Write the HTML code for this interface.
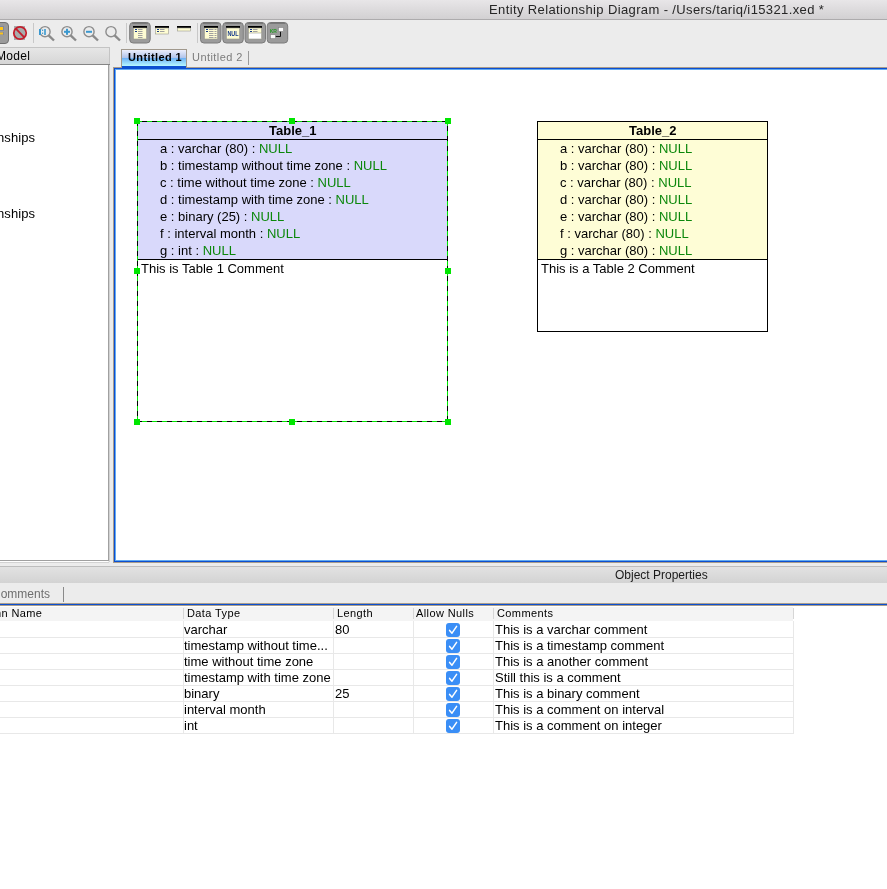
<!DOCTYPE html>
<html><head><meta charset="utf-8">
<style>
*{margin:0;padding:0;box-sizing:border-box}
html,body{width:887px;height:889px;overflow:hidden;background:#fff;font-family:"Liberation Sans",sans-serif;color:#000}
.a{position:absolute}
.t{position:absolute;white-space:pre;line-height:1;will-change:transform}
.nul{color:#0b870b}
</style></head><body>
<div class="a" style="left:0;top:0;width:887px;height:19px;background:linear-gradient(#e8e6e8,#d2d0d2)"></div><div class="a" style="left:0;top:19px;width:887px;height:1px;background:#adabad"></div><div class="t" style="left:488.8px;top:2.75px;font-size:13px;color:#262626;letter-spacing:0.38px;">Entity Relationship Diagram - /Users/tariq/i15321.xed *</div>
<div class="a" style="left:0;top:20px;width:887px;height:547px;background:#ececec"></div><div class="a" style="left:0;top:47px;width:110px;height:1px;background:#c4c4c4"></div><div class="a" style="left:0;top:48px;width:110px;height:16px;background:linear-gradient(#e6e6e6,#d6d6d6)"></div><div class="a" style="left:109px;top:47px;width:1px;height:17px;background:#c4c4c4"></div><div class="a" style="left:0;top:64px;width:110px;height:1px;background:#858585"></div><div class="a" style="left:0;top:65px;width:108px;height:495px;background:#fff"></div><div class="a" style="left:108px;top:65px;width:1px;height:496px;background:#a0a0a0"></div><div class="a" style="left:109px;top:65px;width:1px;height:497px;background:#d2d2d2"></div><div class="a" style="left:0;top:560px;width:108px;height:1px;background:#a0a0a0"></div><div class="a" style="left:0;top:561px;width:108px;height:1px;background:#fff"></div><div class="a" style="left:0;top:562px;width:109px;height:1px;background:#d2d2d2"></div><div class="t" style="left:-4.2px;top:49.64px;font-size:12px;color:#000;letter-spacing:0.3px;">Model</div>
<div class="t" style="left:-2.6px;top:130.90px;font-size:13px;color:#000;letter-spacing:0.1px;">nships</div>
<div class="t" style="left:-2.6px;top:206.80px;font-size:13px;color:#000;letter-spacing:0.1px;">nships</div>
<div class="a" style="left:113px;top:67px;width:774px;height:496px;background:#a89c8c"></div><div class="a" style="left:114px;top:68px;width:773px;height:494px;background:#0c4fd0"></div><div class="a" style="left:115px;top:69px;width:772px;height:492px;background:#62aaf2"></div><div class="a" style="left:116px;top:70px;width:771px;height:490px;background:#fff"></div><div class="a" style="left:121px;top:49px;width:66px;height:18px;background:#a0988c"></div><div class="a" style="left:122px;top:50px;width:64px;height:16px;background:linear-gradient(#eceefc 0%,#aec2ea 50%,#6cb0f6 50%,#b6f8ff 100%)"></div><div class="a" style="left:122px;top:66px;width:64px;height:2px;background:#0c4fd0"></div><div class="t" style="left:127.8px;top:52.39px;font-size:11px;color:#000;font-weight:700;letter-spacing:0.4px;">Untitled 1</div>
<div class="t" style="left:192.3px;top:52.39px;font-size:11px;color:#7c7c7c;letter-spacing:0.44px;">Untitled 2</div>
<div class="a" style="left:248px;top:51px;width:1px;height:14px;background:#9a9a9a"></div><div class="a" style="left:0;top:563px;width:887px;height:3px;background:#ececec"></div><div class="a" style="left:0;top:566px;width:887px;height:1px;background:#bdbdbd"></div><div class="a" style="left:0;top:567px;width:887px;height:16px;background:linear-gradient(#e2e2e2,#d3d3d3)"></div><div class="t" style="left:615.2px;top:568.74px;font-size:12px;color:#1a1a1a;">Object Properties</div>
<div class="a" style="left:0;top:583px;width:887px;height:20px;background:#ececec"></div><div class="t" style="left:-5px;top:587.54px;font-size:12px;color:#6e6e6e;text-align:right;width:55px;">omments</div>
<div class="a" style="left:63px;top:587px;width:1px;height:15px;background:#8a8a8a"></div><div class="a" style="left:0;top:603px;width:887px;height:1px;background:#a89c8c"></div><div class="a" style="left:0;top:604px;width:887px;height:1px;background:#0c4fd0"></div><div class="a" style="left:0;top:605px;width:887px;height:1px;background:#a89c8c"></div><div class="a" style="left:0;top:606px;width:887px;height:283px;background:#fff"></div><div class="a" style="left:0;top:607px;width:793px;height:14px;background:#f4f4f4"></div><div class="a" style="left:183px;top:608px;width:1px;height:11px;background:#d6d6d6"></div><div class="a" style="left:183px;top:621px;width:1px;height:112px;background:#e8e8e8"></div><div class="a" style="left:333px;top:608px;width:1px;height:11px;background:#d6d6d6"></div><div class="a" style="left:333px;top:621px;width:1px;height:112px;background:#e8e8e8"></div><div class="a" style="left:413px;top:608px;width:1px;height:11px;background:#d6d6d6"></div><div class="a" style="left:413px;top:621px;width:1px;height:112px;background:#e8e8e8"></div><div class="a" style="left:493px;top:608px;width:1px;height:11px;background:#d6d6d6"></div><div class="a" style="left:493px;top:621px;width:1px;height:112px;background:#e8e8e8"></div><div class="a" style="left:793px;top:608px;width:1px;height:11px;background:#d6d6d6"></div><div class="a" style="left:793px;top:621px;width:1px;height:112px;background:#e8e8e8"></div><div class="a" style="left:0;top:637px;width:794px;height:1px;background:#e8e8e8"></div><div class="a" style="left:0;top:653px;width:794px;height:1px;background:#e8e8e8"></div><div class="a" style="left:0;top:669px;width:794px;height:1px;background:#e8e8e8"></div><div class="a" style="left:0;top:685px;width:794px;height:1px;background:#e8e8e8"></div><div class="a" style="left:0;top:701px;width:794px;height:1px;background:#e8e8e8"></div><div class="a" style="left:0;top:717px;width:794px;height:1px;background:#e8e8e8"></div><div class="a" style="left:0;top:733px;width:794px;height:1px;background:#e8e8e8"></div><div class="t" style="left:-60px;top:607.69px;font-size:11px;color:#000;letter-spacing:0.4px;width:102.4px;text-align:right;">Column Name</div>
<div class="t" style="left:186.8px;top:607.69px;font-size:11px;color:#000;letter-spacing:0.4px;">Data Type</div>
<div class="t" style="left:337.2px;top:607.69px;font-size:11px;color:#000;letter-spacing:0.4px;">Length</div>
<div class="t" style="left:416.4px;top:607.69px;font-size:11px;color:#000;letter-spacing:0.4px;">Allow Nulls</div>
<div class="t" style="left:496.7px;top:607.69px;font-size:11px;color:#000;letter-spacing:0.4px;">Comments</div>
<div class="t" style="left:184.2px;top:622.50px;font-size:13px;color:#000;">varchar</div>
<div class="t" style="left:335.3px;top:622.50px;font-size:13px;color:#000;">80</div>
<div class="t" style="left:494.7px;top:622.50px;font-size:13px;color:#000;">This is a varchar comment</div>
<svg class="a" style="left:446px;top:623px" width="14" height="14" viewBox="0 0 14 14"><rect x="0" y="0" width="14" height="14" rx="3" fill="#3a8ef6"/><path d="M3.6 7.4 L6 10.2 L10.6 3.4" fill="none" stroke="#fff" stroke-width="1.5" stroke-linecap="round" stroke-linejoin="round"/></svg>
<div class="t" style="left:184.2px;top:638.50px;font-size:13px;color:#000;">timestamp without time...</div>
<div class="t" style="left:494.7px;top:638.50px;font-size:13px;color:#000;">This is a timestamp comment</div>
<svg class="a" style="left:446px;top:639px" width="14" height="14" viewBox="0 0 14 14"><rect x="0" y="0" width="14" height="14" rx="3" fill="#3a8ef6"/><path d="M3.6 7.4 L6 10.2 L10.6 3.4" fill="none" stroke="#fff" stroke-width="1.5" stroke-linecap="round" stroke-linejoin="round"/></svg>
<div class="t" style="left:184.2px;top:654.50px;font-size:13px;color:#000;">time without time zone</div>
<div class="t" style="left:494.7px;top:654.50px;font-size:13px;color:#000;">This is a another comment</div>
<svg class="a" style="left:446px;top:655px" width="14" height="14" viewBox="0 0 14 14"><rect x="0" y="0" width="14" height="14" rx="3" fill="#3a8ef6"/><path d="M3.6 7.4 L6 10.2 L10.6 3.4" fill="none" stroke="#fff" stroke-width="1.5" stroke-linecap="round" stroke-linejoin="round"/></svg>
<div class="t" style="left:184.2px;top:670.50px;font-size:13px;color:#000;">timestamp with time zone</div>
<div class="t" style="left:494.7px;top:670.50px;font-size:13px;color:#000;">Still this is a comment</div>
<svg class="a" style="left:446px;top:671px" width="14" height="14" viewBox="0 0 14 14"><rect x="0" y="0" width="14" height="14" rx="3" fill="#3a8ef6"/><path d="M3.6 7.4 L6 10.2 L10.6 3.4" fill="none" stroke="#fff" stroke-width="1.5" stroke-linecap="round" stroke-linejoin="round"/></svg>
<div class="t" style="left:184.2px;top:686.50px;font-size:13px;color:#000;">binary</div>
<div class="t" style="left:335.3px;top:686.50px;font-size:13px;color:#000;">25</div>
<div class="t" style="left:494.7px;top:686.50px;font-size:13px;color:#000;">This is a binary comment</div>
<svg class="a" style="left:446px;top:687px" width="14" height="14" viewBox="0 0 14 14"><rect x="0" y="0" width="14" height="14" rx="3" fill="#3a8ef6"/><path d="M3.6 7.4 L6 10.2 L10.6 3.4" fill="none" stroke="#fff" stroke-width="1.5" stroke-linecap="round" stroke-linejoin="round"/></svg>
<div class="t" style="left:184.2px;top:702.50px;font-size:13px;color:#000;">interval month</div>
<div class="t" style="left:494.7px;top:702.50px;font-size:13px;color:#000;">This is a comment on interval</div>
<svg class="a" style="left:446px;top:703px" width="14" height="14" viewBox="0 0 14 14"><rect x="0" y="0" width="14" height="14" rx="3" fill="#3a8ef6"/><path d="M3.6 7.4 L6 10.2 L10.6 3.4" fill="none" stroke="#fff" stroke-width="1.5" stroke-linecap="round" stroke-linejoin="round"/></svg>
<div class="t" style="left:184.2px;top:718.50px;font-size:13px;color:#000;">int</div>
<div class="t" style="left:494.7px;top:718.50px;font-size:13px;color:#000;">This is a comment on integer</div>
<svg class="a" style="left:446px;top:719px" width="14" height="14" viewBox="0 0 14 14"><rect x="0" y="0" width="14" height="14" rx="3" fill="#3a8ef6"/><path d="M3.6 7.4 L6 10.2 L10.6 3.4" fill="none" stroke="#fff" stroke-width="1.5" stroke-linecap="round" stroke-linejoin="round"/></svg>
<div class="a" style="left:137px;top:121px;width:311px;height:139px;background:#d9d9fb"></div><div class="a" style="left:138px;top:139px;width:309px;height:1px;background:#000"></div><div class="a" style="left:138px;top:259px;width:309px;height:1px;background:#000"></div><div class="a" style="left:137px;top:121px;width:5px;height:1px;background:#00e600"></div><div class="a" style="left:142px;top:121px;width:5px;height:1px;background:#000"></div><div class="a" style="left:147px;top:121px;width:5px;height:1px;background:#00e600"></div><div class="a" style="left:152px;top:121px;width:5px;height:1px;background:#000"></div><div class="a" style="left:157px;top:121px;width:5px;height:1px;background:#00e600"></div><div class="a" style="left:162px;top:121px;width:5px;height:1px;background:#000"></div><div class="a" style="left:167px;top:121px;width:5px;height:1px;background:#00e600"></div><div class="a" style="left:172px;top:121px;width:5px;height:1px;background:#000"></div><div class="a" style="left:177px;top:121px;width:5px;height:1px;background:#00e600"></div><div class="a" style="left:182px;top:121px;width:5px;height:1px;background:#000"></div><div class="a" style="left:187px;top:121px;width:5px;height:1px;background:#00e600"></div><div class="a" style="left:192px;top:121px;width:5px;height:1px;background:#000"></div><div class="a" style="left:197px;top:121px;width:5px;height:1px;background:#00e600"></div><div class="a" style="left:202px;top:121px;width:5px;height:1px;background:#000"></div><div class="a" style="left:207px;top:121px;width:5px;height:1px;background:#00e600"></div><div class="a" style="left:212px;top:121px;width:5px;height:1px;background:#000"></div><div class="a" style="left:217px;top:121px;width:5px;height:1px;background:#00e600"></div><div class="a" style="left:222px;top:121px;width:5px;height:1px;background:#000"></div><div class="a" style="left:227px;top:121px;width:5px;height:1px;background:#00e600"></div><div class="a" style="left:232px;top:121px;width:5px;height:1px;background:#000"></div><div class="a" style="left:237px;top:121px;width:5px;height:1px;background:#00e600"></div><div class="a" style="left:242px;top:121px;width:5px;height:1px;background:#000"></div><div class="a" style="left:247px;top:121px;width:5px;height:1px;background:#00e600"></div><div class="a" style="left:252px;top:121px;width:5px;height:1px;background:#000"></div><div class="a" style="left:257px;top:121px;width:5px;height:1px;background:#00e600"></div><div class="a" style="left:262px;top:121px;width:5px;height:1px;background:#000"></div><div class="a" style="left:267px;top:121px;width:5px;height:1px;background:#00e600"></div><div class="a" style="left:272px;top:121px;width:5px;height:1px;background:#000"></div><div class="a" style="left:277px;top:121px;width:5px;height:1px;background:#00e600"></div><div class="a" style="left:282px;top:121px;width:5px;height:1px;background:#000"></div><div class="a" style="left:287px;top:121px;width:5px;height:1px;background:#00e600"></div><div class="a" style="left:292px;top:121px;width:5px;height:1px;background:#000"></div><div class="a" style="left:297px;top:121px;width:5px;height:1px;background:#00e600"></div><div class="a" style="left:302px;top:121px;width:5px;height:1px;background:#000"></div><div class="a" style="left:307px;top:121px;width:5px;height:1px;background:#00e600"></div><div class="a" style="left:312px;top:121px;width:5px;height:1px;background:#000"></div><div class="a" style="left:317px;top:121px;width:5px;height:1px;background:#00e600"></div><div class="a" style="left:322px;top:121px;width:5px;height:1px;background:#000"></div><div class="a" style="left:327px;top:121px;width:5px;height:1px;background:#00e600"></div><div class="a" style="left:332px;top:121px;width:5px;height:1px;background:#000"></div><div class="a" style="left:337px;top:121px;width:5px;height:1px;background:#00e600"></div><div class="a" style="left:342px;top:121px;width:5px;height:1px;background:#000"></div><div class="a" style="left:347px;top:121px;width:5px;height:1px;background:#00e600"></div><div class="a" style="left:352px;top:121px;width:5px;height:1px;background:#000"></div><div class="a" style="left:357px;top:121px;width:5px;height:1px;background:#00e600"></div><div class="a" style="left:362px;top:121px;width:5px;height:1px;background:#000"></div><div class="a" style="left:367px;top:121px;width:5px;height:1px;background:#00e600"></div><div class="a" style="left:372px;top:121px;width:5px;height:1px;background:#000"></div><div class="a" style="left:377px;top:121px;width:5px;height:1px;background:#00e600"></div><div class="a" style="left:382px;top:121px;width:5px;height:1px;background:#000"></div><div class="a" style="left:387px;top:121px;width:5px;height:1px;background:#00e600"></div><div class="a" style="left:392px;top:121px;width:5px;height:1px;background:#000"></div><div class="a" style="left:397px;top:121px;width:5px;height:1px;background:#00e600"></div><div class="a" style="left:402px;top:121px;width:5px;height:1px;background:#000"></div><div class="a" style="left:407px;top:121px;width:5px;height:1px;background:#00e600"></div><div class="a" style="left:412px;top:121px;width:5px;height:1px;background:#000"></div><div class="a" style="left:417px;top:121px;width:5px;height:1px;background:#00e600"></div><div class="a" style="left:422px;top:121px;width:5px;height:1px;background:#000"></div><div class="a" style="left:427px;top:121px;width:5px;height:1px;background:#00e600"></div><div class="a" style="left:432px;top:121px;width:5px;height:1px;background:#000"></div><div class="a" style="left:437px;top:121px;width:5px;height:1px;background:#00e600"></div><div class="a" style="left:442px;top:121px;width:5px;height:1px;background:#000"></div><div class="a" style="left:447px;top:121px;width:1px;height:1px;background:#00e600"></div><div class="a" style="left:447px;top:121px;width:1px;height:5px;background:#00e600"></div><div class="a" style="left:447px;top:126px;width:1px;height:5px;background:#000"></div><div class="a" style="left:447px;top:131px;width:1px;height:5px;background:#00e600"></div><div class="a" style="left:447px;top:136px;width:1px;height:5px;background:#000"></div><div class="a" style="left:447px;top:141px;width:1px;height:5px;background:#00e600"></div><div class="a" style="left:447px;top:146px;width:1px;height:5px;background:#000"></div><div class="a" style="left:447px;top:151px;width:1px;height:5px;background:#00e600"></div><div class="a" style="left:447px;top:156px;width:1px;height:5px;background:#000"></div><div class="a" style="left:447px;top:161px;width:1px;height:5px;background:#00e600"></div><div class="a" style="left:447px;top:166px;width:1px;height:5px;background:#000"></div><div class="a" style="left:447px;top:171px;width:1px;height:5px;background:#00e600"></div><div class="a" style="left:447px;top:176px;width:1px;height:5px;background:#000"></div><div class="a" style="left:447px;top:181px;width:1px;height:5px;background:#00e600"></div><div class="a" style="left:447px;top:186px;width:1px;height:5px;background:#000"></div><div class="a" style="left:447px;top:191px;width:1px;height:5px;background:#00e600"></div><div class="a" style="left:447px;top:196px;width:1px;height:5px;background:#000"></div><div class="a" style="left:447px;top:201px;width:1px;height:5px;background:#00e600"></div><div class="a" style="left:447px;top:206px;width:1px;height:5px;background:#000"></div><div class="a" style="left:447px;top:211px;width:1px;height:5px;background:#00e600"></div><div class="a" style="left:447px;top:216px;width:1px;height:5px;background:#000"></div><div class="a" style="left:447px;top:221px;width:1px;height:5px;background:#00e600"></div><div class="a" style="left:447px;top:226px;width:1px;height:5px;background:#000"></div><div class="a" style="left:447px;top:231px;width:1px;height:5px;background:#00e600"></div><div class="a" style="left:447px;top:236px;width:1px;height:5px;background:#000"></div><div class="a" style="left:447px;top:241px;width:1px;height:5px;background:#00e600"></div><div class="a" style="left:447px;top:246px;width:1px;height:5px;background:#000"></div><div class="a" style="left:447px;top:251px;width:1px;height:5px;background:#00e600"></div><div class="a" style="left:447px;top:256px;width:1px;height:5px;background:#000"></div><div class="a" style="left:447px;top:261px;width:1px;height:5px;background:#00e600"></div><div class="a" style="left:447px;top:266px;width:1px;height:5px;background:#000"></div><div class="a" style="left:447px;top:271px;width:1px;height:5px;background:#00e600"></div><div class="a" style="left:447px;top:276px;width:1px;height:5px;background:#000"></div><div class="a" style="left:447px;top:281px;width:1px;height:5px;background:#00e600"></div><div class="a" style="left:447px;top:286px;width:1px;height:5px;background:#000"></div><div class="a" style="left:447px;top:291px;width:1px;height:5px;background:#00e600"></div><div class="a" style="left:447px;top:296px;width:1px;height:5px;background:#000"></div><div class="a" style="left:447px;top:301px;width:1px;height:5px;background:#00e600"></div><div class="a" style="left:447px;top:306px;width:1px;height:5px;background:#000"></div><div class="a" style="left:447px;top:311px;width:1px;height:5px;background:#00e600"></div><div class="a" style="left:447px;top:316px;width:1px;height:5px;background:#000"></div><div class="a" style="left:447px;top:321px;width:1px;height:5px;background:#00e600"></div><div class="a" style="left:447px;top:326px;width:1px;height:5px;background:#000"></div><div class="a" style="left:447px;top:331px;width:1px;height:5px;background:#00e600"></div><div class="a" style="left:447px;top:336px;width:1px;height:5px;background:#000"></div><div class="a" style="left:447px;top:341px;width:1px;height:5px;background:#00e600"></div><div class="a" style="left:447px;top:346px;width:1px;height:5px;background:#000"></div><div class="a" style="left:447px;top:351px;width:1px;height:5px;background:#00e600"></div><div class="a" style="left:447px;top:356px;width:1px;height:5px;background:#000"></div><div class="a" style="left:447px;top:361px;width:1px;height:5px;background:#00e600"></div><div class="a" style="left:447px;top:366px;width:1px;height:5px;background:#000"></div><div class="a" style="left:447px;top:371px;width:1px;height:5px;background:#00e600"></div><div class="a" style="left:447px;top:376px;width:1px;height:5px;background:#000"></div><div class="a" style="left:447px;top:381px;width:1px;height:5px;background:#00e600"></div><div class="a" style="left:447px;top:386px;width:1px;height:5px;background:#000"></div><div class="a" style="left:447px;top:391px;width:1px;height:5px;background:#00e600"></div><div class="a" style="left:447px;top:396px;width:1px;height:5px;background:#000"></div><div class="a" style="left:447px;top:401px;width:1px;height:5px;background:#00e600"></div><div class="a" style="left:447px;top:406px;width:1px;height:5px;background:#000"></div><div class="a" style="left:447px;top:411px;width:1px;height:5px;background:#00e600"></div><div class="a" style="left:447px;top:416px;width:1px;height:5px;background:#000"></div><div class="a" style="left:447px;top:421px;width:1px;height:1px;background:#00e600"></div><div class="a" style="left:137px;top:421px;width:5px;height:1px;background:#000"></div><div class="a" style="left:142px;top:421px;width:5px;height:1px;background:#00e600"></div><div class="a" style="left:147px;top:421px;width:5px;height:1px;background:#000"></div><div class="a" style="left:152px;top:421px;width:5px;height:1px;background:#00e600"></div><div class="a" style="left:157px;top:421px;width:5px;height:1px;background:#000"></div><div class="a" style="left:162px;top:421px;width:5px;height:1px;background:#00e600"></div><div class="a" style="left:167px;top:421px;width:5px;height:1px;background:#000"></div><div class="a" style="left:172px;top:421px;width:5px;height:1px;background:#00e600"></div><div class="a" style="left:177px;top:421px;width:5px;height:1px;background:#000"></div><div class="a" style="left:182px;top:421px;width:5px;height:1px;background:#00e600"></div><div class="a" style="left:187px;top:421px;width:5px;height:1px;background:#000"></div><div class="a" style="left:192px;top:421px;width:5px;height:1px;background:#00e600"></div><div class="a" style="left:197px;top:421px;width:5px;height:1px;background:#000"></div><div class="a" style="left:202px;top:421px;width:5px;height:1px;background:#00e600"></div><div class="a" style="left:207px;top:421px;width:5px;height:1px;background:#000"></div><div class="a" style="left:212px;top:421px;width:5px;height:1px;background:#00e600"></div><div class="a" style="left:217px;top:421px;width:5px;height:1px;background:#000"></div><div class="a" style="left:222px;top:421px;width:5px;height:1px;background:#00e600"></div><div class="a" style="left:227px;top:421px;width:5px;height:1px;background:#000"></div><div class="a" style="left:232px;top:421px;width:5px;height:1px;background:#00e600"></div><div class="a" style="left:237px;top:421px;width:5px;height:1px;background:#000"></div><div class="a" style="left:242px;top:421px;width:5px;height:1px;background:#00e600"></div><div class="a" style="left:247px;top:421px;width:5px;height:1px;background:#000"></div><div class="a" style="left:252px;top:421px;width:5px;height:1px;background:#00e600"></div><div class="a" style="left:257px;top:421px;width:5px;height:1px;background:#000"></div><div class="a" style="left:262px;top:421px;width:5px;height:1px;background:#00e600"></div><div class="a" style="left:267px;top:421px;width:5px;height:1px;background:#000"></div><div class="a" style="left:272px;top:421px;width:5px;height:1px;background:#00e600"></div><div class="a" style="left:277px;top:421px;width:5px;height:1px;background:#000"></div><div class="a" style="left:282px;top:421px;width:5px;height:1px;background:#00e600"></div><div class="a" style="left:287px;top:421px;width:5px;height:1px;background:#000"></div><div class="a" style="left:292px;top:421px;width:5px;height:1px;background:#00e600"></div><div class="a" style="left:297px;top:421px;width:5px;height:1px;background:#000"></div><div class="a" style="left:302px;top:421px;width:5px;height:1px;background:#00e600"></div><div class="a" style="left:307px;top:421px;width:5px;height:1px;background:#000"></div><div class="a" style="left:312px;top:421px;width:5px;height:1px;background:#00e600"></div><div class="a" style="left:317px;top:421px;width:5px;height:1px;background:#000"></div><div class="a" style="left:322px;top:421px;width:5px;height:1px;background:#00e600"></div><div class="a" style="left:327px;top:421px;width:5px;height:1px;background:#000"></div><div class="a" style="left:332px;top:421px;width:5px;height:1px;background:#00e600"></div><div class="a" style="left:337px;top:421px;width:5px;height:1px;background:#000"></div><div class="a" style="left:342px;top:421px;width:5px;height:1px;background:#00e600"></div><div class="a" style="left:347px;top:421px;width:5px;height:1px;background:#000"></div><div class="a" style="left:352px;top:421px;width:5px;height:1px;background:#00e600"></div><div class="a" style="left:357px;top:421px;width:5px;height:1px;background:#000"></div><div class="a" style="left:362px;top:421px;width:5px;height:1px;background:#00e600"></div><div class="a" style="left:367px;top:421px;width:5px;height:1px;background:#000"></div><div class="a" style="left:372px;top:421px;width:5px;height:1px;background:#00e600"></div><div class="a" style="left:377px;top:421px;width:5px;height:1px;background:#000"></div><div class="a" style="left:382px;top:421px;width:5px;height:1px;background:#00e600"></div><div class="a" style="left:387px;top:421px;width:5px;height:1px;background:#000"></div><div class="a" style="left:392px;top:421px;width:5px;height:1px;background:#00e600"></div><div class="a" style="left:397px;top:421px;width:5px;height:1px;background:#000"></div><div class="a" style="left:402px;top:421px;width:5px;height:1px;background:#00e600"></div><div class="a" style="left:407px;top:421px;width:5px;height:1px;background:#000"></div><div class="a" style="left:412px;top:421px;width:5px;height:1px;background:#00e600"></div><div class="a" style="left:417px;top:421px;width:5px;height:1px;background:#000"></div><div class="a" style="left:422px;top:421px;width:5px;height:1px;background:#00e600"></div><div class="a" style="left:427px;top:421px;width:5px;height:1px;background:#000"></div><div class="a" style="left:432px;top:421px;width:5px;height:1px;background:#00e600"></div><div class="a" style="left:437px;top:421px;width:5px;height:1px;background:#000"></div><div class="a" style="left:442px;top:421px;width:5px;height:1px;background:#00e600"></div><div class="a" style="left:447px;top:421px;width:1px;height:1px;background:#000"></div><div class="a" style="left:137px;top:121px;width:1px;height:5px;background:#000"></div><div class="a" style="left:137px;top:126px;width:1px;height:5px;background:#00e600"></div><div class="a" style="left:137px;top:131px;width:1px;height:5px;background:#000"></div><div class="a" style="left:137px;top:136px;width:1px;height:5px;background:#00e600"></div><div class="a" style="left:137px;top:141px;width:1px;height:5px;background:#000"></div><div class="a" style="left:137px;top:146px;width:1px;height:5px;background:#00e600"></div><div class="a" style="left:137px;top:151px;width:1px;height:5px;background:#000"></div><div class="a" style="left:137px;top:156px;width:1px;height:5px;background:#00e600"></div><div class="a" style="left:137px;top:161px;width:1px;height:5px;background:#000"></div><div class="a" style="left:137px;top:166px;width:1px;height:5px;background:#00e600"></div><div class="a" style="left:137px;top:171px;width:1px;height:5px;background:#000"></div><div class="a" style="left:137px;top:176px;width:1px;height:5px;background:#00e600"></div><div class="a" style="left:137px;top:181px;width:1px;height:5px;background:#000"></div><div class="a" style="left:137px;top:186px;width:1px;height:5px;background:#00e600"></div><div class="a" style="left:137px;top:191px;width:1px;height:5px;background:#000"></div><div class="a" style="left:137px;top:196px;width:1px;height:5px;background:#00e600"></div><div class="a" style="left:137px;top:201px;width:1px;height:5px;background:#000"></div><div class="a" style="left:137px;top:206px;width:1px;height:5px;background:#00e600"></div><div class="a" style="left:137px;top:211px;width:1px;height:5px;background:#000"></div><div class="a" style="left:137px;top:216px;width:1px;height:5px;background:#00e600"></div><div class="a" style="left:137px;top:221px;width:1px;height:5px;background:#000"></div><div class="a" style="left:137px;top:226px;width:1px;height:5px;background:#00e600"></div><div class="a" style="left:137px;top:231px;width:1px;height:5px;background:#000"></div><div class="a" style="left:137px;top:236px;width:1px;height:5px;background:#00e600"></div><div class="a" style="left:137px;top:241px;width:1px;height:5px;background:#000"></div><div class="a" style="left:137px;top:246px;width:1px;height:5px;background:#00e600"></div><div class="a" style="left:137px;top:251px;width:1px;height:5px;background:#000"></div><div class="a" style="left:137px;top:256px;width:1px;height:5px;background:#00e600"></div><div class="a" style="left:137px;top:261px;width:1px;height:5px;background:#000"></div><div class="a" style="left:137px;top:266px;width:1px;height:5px;background:#00e600"></div><div class="a" style="left:137px;top:271px;width:1px;height:5px;background:#000"></div><div class="a" style="left:137px;top:276px;width:1px;height:5px;background:#00e600"></div><div class="a" style="left:137px;top:281px;width:1px;height:5px;background:#000"></div><div class="a" style="left:137px;top:286px;width:1px;height:5px;background:#00e600"></div><div class="a" style="left:137px;top:291px;width:1px;height:5px;background:#000"></div><div class="a" style="left:137px;top:296px;width:1px;height:5px;background:#00e600"></div><div class="a" style="left:137px;top:301px;width:1px;height:5px;background:#000"></div><div class="a" style="left:137px;top:306px;width:1px;height:5px;background:#00e600"></div><div class="a" style="left:137px;top:311px;width:1px;height:5px;background:#000"></div><div class="a" style="left:137px;top:316px;width:1px;height:5px;background:#00e600"></div><div class="a" style="left:137px;top:321px;width:1px;height:5px;background:#000"></div><div class="a" style="left:137px;top:326px;width:1px;height:5px;background:#00e600"></div><div class="a" style="left:137px;top:331px;width:1px;height:5px;background:#000"></div><div class="a" style="left:137px;top:336px;width:1px;height:5px;background:#00e600"></div><div class="a" style="left:137px;top:341px;width:1px;height:5px;background:#000"></div><div class="a" style="left:137px;top:346px;width:1px;height:5px;background:#00e600"></div><div class="a" style="left:137px;top:351px;width:1px;height:5px;background:#000"></div><div class="a" style="left:137px;top:356px;width:1px;height:5px;background:#00e600"></div><div class="a" style="left:137px;top:361px;width:1px;height:5px;background:#000"></div><div class="a" style="left:137px;top:366px;width:1px;height:5px;background:#00e600"></div><div class="a" style="left:137px;top:371px;width:1px;height:5px;background:#000"></div><div class="a" style="left:137px;top:376px;width:1px;height:5px;background:#00e600"></div><div class="a" style="left:137px;top:381px;width:1px;height:5px;background:#000"></div><div class="a" style="left:137px;top:386px;width:1px;height:5px;background:#00e600"></div><div class="a" style="left:137px;top:391px;width:1px;height:5px;background:#000"></div><div class="a" style="left:137px;top:396px;width:1px;height:5px;background:#00e600"></div><div class="a" style="left:137px;top:401px;width:1px;height:5px;background:#000"></div><div class="a" style="left:137px;top:406px;width:1px;height:5px;background:#00e600"></div><div class="a" style="left:137px;top:411px;width:1px;height:5px;background:#000"></div><div class="a" style="left:137px;top:416px;width:1px;height:5px;background:#00e600"></div><div class="a" style="left:137px;top:421px;width:1px;height:1px;background:#000"></div>
<div class="t" style="left:269.1px;top:124.00px;font-size:13px;color:#000;font-weight:700;">Table_1</div>
<div class="t" style="left:159.5px;top:141.60px;font-size:13px;color:#000;">a : varchar (80) : <span class="nul">NULL</span></div>
<div class="t" style="left:159.5px;top:158.60px;font-size:13px;color:#000;">b : timestamp without time zone : <span class="nul">NULL</span></div>
<div class="t" style="left:159.5px;top:175.60px;font-size:13px;color:#000;">c : time without time zone : <span class="nul">NULL</span></div>
<div class="t" style="left:159.5px;top:192.60px;font-size:13px;color:#000;">d : timestamp with time zone : <span class="nul">NULL</span></div>
<div class="t" style="left:159.5px;top:209.60px;font-size:13px;color:#000;">e : binary (25) : <span class="nul">NULL</span></div>
<div class="t" style="left:159.5px;top:226.60px;font-size:13px;color:#000;">f : interval month : <span class="nul">NULL</span></div>
<div class="t" style="left:159.5px;top:243.60px;font-size:13px;color:#000;">g : int : <span class="nul">NULL</span></div>
<div class="t" style="left:141.3px;top:261.50px;font-size:13px;color:#000;">This is Table 1 Comment</div>
<div class="a" style="left:134px;top:118px;width:6px;height:6px;background:#00e600"></div><div class="a" style="left:289px;top:118px;width:6px;height:6px;background:#00e600"></div><div class="a" style="left:445px;top:118px;width:6px;height:6px;background:#00e600"></div><div class="a" style="left:134px;top:268px;width:6px;height:6px;background:#00e600"></div><div class="a" style="left:445px;top:268px;width:6px;height:6px;background:#00e600"></div><div class="a" style="left:134px;top:419px;width:6px;height:6px;background:#00e600"></div><div class="a" style="left:289px;top:419px;width:6px;height:6px;background:#00e600"></div><div class="a" style="left:445px;top:419px;width:6px;height:6px;background:#00e600"></div><div class="a" style="left:537px;top:121px;width:231px;height:211px;background:#000"></div><div class="a" style="left:538px;top:122px;width:229px;height:17px;background:#fefdd6"></div><div class="a" style="left:538px;top:140px;width:229px;height:119px;background:#fefdd6"></div><div class="a" style="left:538px;top:260px;width:229px;height:71px;background:#fff"></div><div class="t" style="left:629px;top:124.00px;font-size:13px;color:#000;font-weight:700;">Table_2</div>
<div class="t" style="left:559.7px;top:141.60px;font-size:13px;color:#000;">a : varchar (80) : <span class="nul">NULL</span></div>
<div class="t" style="left:559.7px;top:158.60px;font-size:13px;color:#000;">b : varchar (80) : <span class="nul">NULL</span></div>
<div class="t" style="left:559.7px;top:175.60px;font-size:13px;color:#000;">c : varchar (80) : <span class="nul">NULL</span></div>
<div class="t" style="left:559.7px;top:192.60px;font-size:13px;color:#000;">d : varchar (80) : <span class="nul">NULL</span></div>
<div class="t" style="left:559.7px;top:209.60px;font-size:13px;color:#000;">e : varchar (80) : <span class="nul">NULL</span></div>
<div class="t" style="left:559.7px;top:226.60px;font-size:13px;color:#000;">f : varchar (80) : <span class="nul">NULL</span></div>
<div class="t" style="left:559.7px;top:243.60px;font-size:13px;color:#000;">g : varchar (80) : <span class="nul">NULL</span></div>
<div class="t" style="left:541.3px;top:261.50px;font-size:13px;color:#000;">This is a Table 2 Comment</div>
<svg class="a" style="left:0;top:0;will-change:transform" width="300" height="48" viewBox="0 0 300 48"><rect x="-13.5" y="22.5" width="22" height="21" rx="3.5" fill="#9b9b9b" stroke="#707070" stroke-width="1"/><rect x="-3" y="26" width="7" height="5" fill="#8088a0"/><rect x="-3" y="27" width="6" height="3" fill="#ffc516"/><rect x="-3" y="32" width="7" height="3" fill="#8088a0"/><rect x="-3" y="32.5" width="6" height="2" fill="#ffc516"/><rect x="14" y="26" width="11" height="14" fill="#a6adad" /><circle cx="20" cy="33" r="6.2" fill="none" stroke="#c41d2b" stroke-width="1.8"/><path d="M15.8 28.6 L24.3 37.4" stroke="#c41d2b" stroke-width="1.8"/><rect x="33" y="23" width="1" height="20" fill="#c8c8c8"/><path d="M48.6 35.3 L54 40.5" stroke="#8a8a8a" stroke-width="2.4" stroke-linecap="butt"/><circle cx="45" cy="31.7" r="5.1" fill="none" stroke="#8c8c8c" stroke-width="1.4"/><path d="M70.6 35.3 L76 40.5" stroke="#8a8a8a" stroke-width="2.4" stroke-linecap="butt"/><circle cx="67" cy="31.7" r="5.1" fill="none" stroke="#8c8c8c" stroke-width="1.4"/><path d="M92.6 35.3 L98 40.5" stroke="#8a8a8a" stroke-width="2.4" stroke-linecap="butt"/><circle cx="89" cy="31.7" r="5.1" fill="none" stroke="#8c8c8c" stroke-width="1.4"/><path d="M114.6 35.3 L120 40.5" stroke="#8a8a8a" stroke-width="2.4" stroke-linecap="butt"/><circle cx="111" cy="31.7" r="5.1" fill="none" stroke="#8c8c8c" stroke-width="1.4"/><rect x="39" y="29" width="2" height="6" fill="#3a98cf"/><rect x="42" y="29.6" width="1.2" height="1.3" fill="#3a98cf"/><rect x="42" y="32.6" width="1.2" height="1.3" fill="#3a98cf"/><rect x="44.2" y="29" width="1.6" height="6" fill="#3a98cf"/><rect x="64" y="30.8" width="6" height="2" fill="#3a98cf"/><rect x="66" y="28.8" width="2" height="6" fill="#3a98cf"/><rect x="86" y="30.8" width="6" height="2" fill="#3a98cf"/><rect x="126" y="23" width="1" height="20" fill="#c8c8c8"/><rect x="129.7" y="22.5" width="20.5" height="20.5" rx="3.5" fill="#9b9b9b" stroke="#7a7a7a" stroke-width="1"/><path d="M132.2 23.2 H147.7" stroke="#6a6a6a" stroke-width="1"/><rect x="133" y="26" width="14" height="2" fill="#000"/><rect x="133.5" y="28" width="13" height="11" fill="#fefcd2" stroke="#9a9a90" stroke-width="0.6"/><rect x="135" y="29" width="2" height="1" fill="#173a8a"/><rect x="138" y="29" width="4.5" height="1" fill="#a0a0a0"/><rect x="135" y="31" width="2" height="1" fill="#173a8a"/><rect x="138" y="31" width="4.5" height="1" fill="#a0a0a0"/><rect x="138" y="33" width="4.5" height="1" fill="#a0a0a0"/><rect x="138" y="35" width="4.5" height="1" fill="#a0a0a0"/><rect x="138" y="37" width="4.5" height="1" fill="#a0a0a0"/><rect x="155" y="26" width="14" height="2" fill="#000"/><rect x="155.5" y="28" width="13" height="6" fill="#fefcd2" stroke="#9a9a90" stroke-width="0.6"/><rect x="157" y="29" width="2" height="1" fill="#173a8a"/><rect x="160" y="29" width="4.5" height="1" fill="#a0a0a0"/><rect x="157" y="31" width="2" height="1" fill="#173a8a"/><rect x="160" y="31" width="4.5" height="1" fill="#a0a0a0"/><rect x="177" y="26" width="14" height="2" fill="#000"/><rect x="177.5" y="28" width="13" height="3" fill="#fefcd2" stroke="#9a9a90" stroke-width="0.6"/><rect x="197" y="23" width="1" height="20" fill="#c8c8c8"/><rect x="200.5" y="22.5" width="20.5" height="20.5" rx="3.5" fill="#9b9b9b" stroke="#7a7a7a" stroke-width="1"/><path d="M203 23.2 H218.5" stroke="#6a6a6a" stroke-width="1"/><rect x="204" y="26" width="14" height="2" fill="#000"/><rect x="204.5" y="28" width="13" height="11" fill="#fefcd2" stroke="#9a9a90" stroke-width="0.6"/><rect x="206" y="29" width="2" height="1" fill="#173a8a"/><rect x="209" y="29" width="4.5" height="1" fill="#a0a0a0"/><rect x="214.5" y="29" width="2" height="1" fill="#a0a0a0"/><rect x="206" y="31" width="2" height="1" fill="#173a8a"/><rect x="209" y="31" width="4.5" height="1" fill="#a0a0a0"/><rect x="214.5" y="31" width="2" height="1" fill="#a0a0a0"/><rect x="209" y="33" width="4.5" height="1" fill="#a0a0a0"/><rect x="214.5" y="33" width="2" height="1" fill="#a0a0a0"/><rect x="209" y="35" width="4.5" height="1" fill="#a0a0a0"/><rect x="214.5" y="35" width="2" height="1" fill="#a0a0a0"/><rect x="209" y="37" width="4.5" height="1" fill="#a0a0a0"/><rect x="214.5" y="37" width="2" height="1" fill="#a0a0a0"/><rect x="222.8" y="22.5" width="20.5" height="20.5" rx="3.5" fill="#9b9b9b" stroke="#7a7a7a" stroke-width="1"/><path d="M225.3 23.2 H240.8" stroke="#6a6a6a" stroke-width="1"/><rect x="226" y="26" width="14" height="2" fill="#000"/><rect x="226.5" y="28" width="13" height="11" fill="#fefcd2" stroke="#9a9a90" stroke-width="0.6"/><text x="227.4" y="35.6" font-family="Liberation Sans" font-weight="700" font-size="6.6" fill="#163a8c" textLength="11.2" lengthAdjust="spacingAndGlyphs">NUL</text><rect x="245.0" y="22.5" width="20.5" height="20.5" rx="3.5" fill="#9b9b9b" stroke="#7a7a7a" stroke-width="1"/><path d="M247.5 23.2 H263.0" stroke="#6a6a6a" stroke-width="1"/><rect x="248" y="26" width="14" height="2" fill="#000"/><rect x="248.5" y="28" width="13" height="11" fill="#fefcd2" stroke="#9a9a90" stroke-width="0.6"/><rect x="248.5" y="33" width="13" height="6" fill="#fff" stroke="#9a9a90" stroke-width="0.6"/><rect x="250" y="29" width="2" height="1" fill="#173a8a"/><rect x="253" y="29" width="4.5" height="1" fill="#a0a0a0"/><rect x="250" y="31" width="2" height="1" fill="#173a8a"/><rect x="253" y="31" width="4.5" height="1" fill="#a0a0a0"/><rect x="267.2" y="22.5" width="20.5" height="20.5" rx="3.5" fill="#9b9b9b" stroke="#7a7a7a" stroke-width="1"/><path d="M269.7 23.2 H285.2" stroke="#6a6a6a" stroke-width="1"/><text x="269.7" y="33.3" font-family="Liberation Sans" font-weight="700" font-size="5.9" fill="#2a9a2a" textLength="7.3" lengthAdjust="spacingAndGlyphs">KR</text><path d="M280.5 31 V36.5 H275" fill="none" stroke="#111" stroke-width="1"/><rect x="278.5" y="27.5" width="5" height="4" fill="#fafafa" stroke="#808080" stroke-width="0.6"/><rect x="270.5" y="34.7" width="5" height="4" fill="#fafafa" stroke="#808080" stroke-width="0.6"/></svg>
</body></html>
